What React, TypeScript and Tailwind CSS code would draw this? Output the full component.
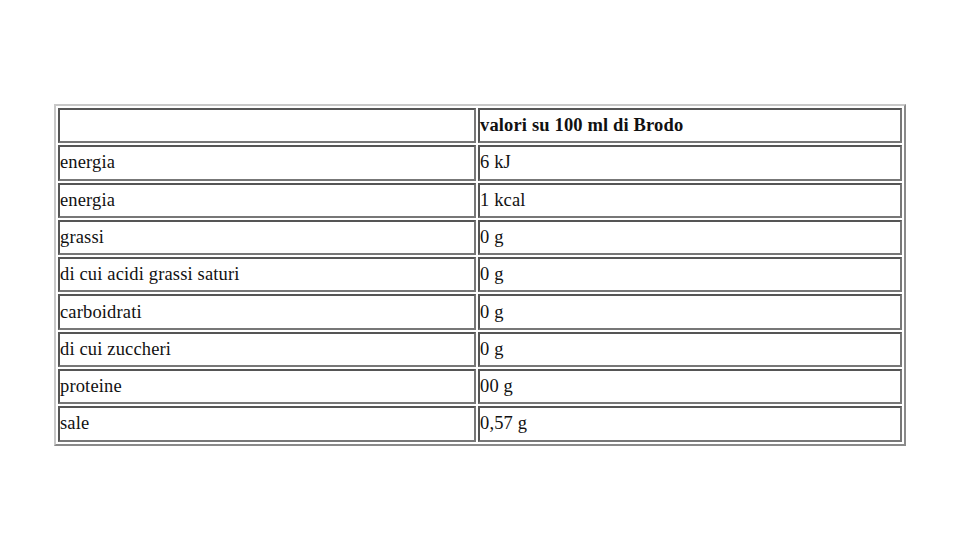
const rows: [string, string][] = [
  ["energia", "6 kJ"],
  ["energia", "1 kcal"],
  ["grassi", "0 g"],
  ["di cui acidi grassi saturi", "0 g"],
  ["carboidrati", "0 g"],
  ["di cui zuccheri", "0 g"],
  ["proteine", "00 g"],
  ["sale", "0,57 g"],
];

const cell =
  "h-[35.3px] border-2 border-t-[#555] border-l-[#555] border-b-[#777] border-r-[#777] p-0 align-middle text-left";

export default function App() {
  return (
    <div className="min-h-[540px] w-[960px] bg-white pt-[104px] font-['Liberation_Serif',serif] text-[18.5px] leading-tight tracking-[0.15px] text-[#111]">
      <table className="mx-auto w-[852px] table-fixed border-separate border-spacing-[2px] border-2 border-t-[#c8c8c8] border-l-[#c8c8c8] border-b-[#8a8a8a] border-r-[#8a8a8a]">
        <colgroup>
          <col className="w-[418px]" />
          <col className="w-[424px]" />
        </colgroup>
        <tbody>
          <tr>
            <td className={cell}></td>
            <td className={cell + " font-bold"}>valori su 100 ml di Brodo</td>
          </tr>
          {rows.map(([label, value], i) => (
            <tr key={i}>
              <td className={cell}>{label}</td>
              <td className={cell}>{value}</td>
            </tr>
          ))}
        </tbody>
      </table>
    </div>
  );
}
